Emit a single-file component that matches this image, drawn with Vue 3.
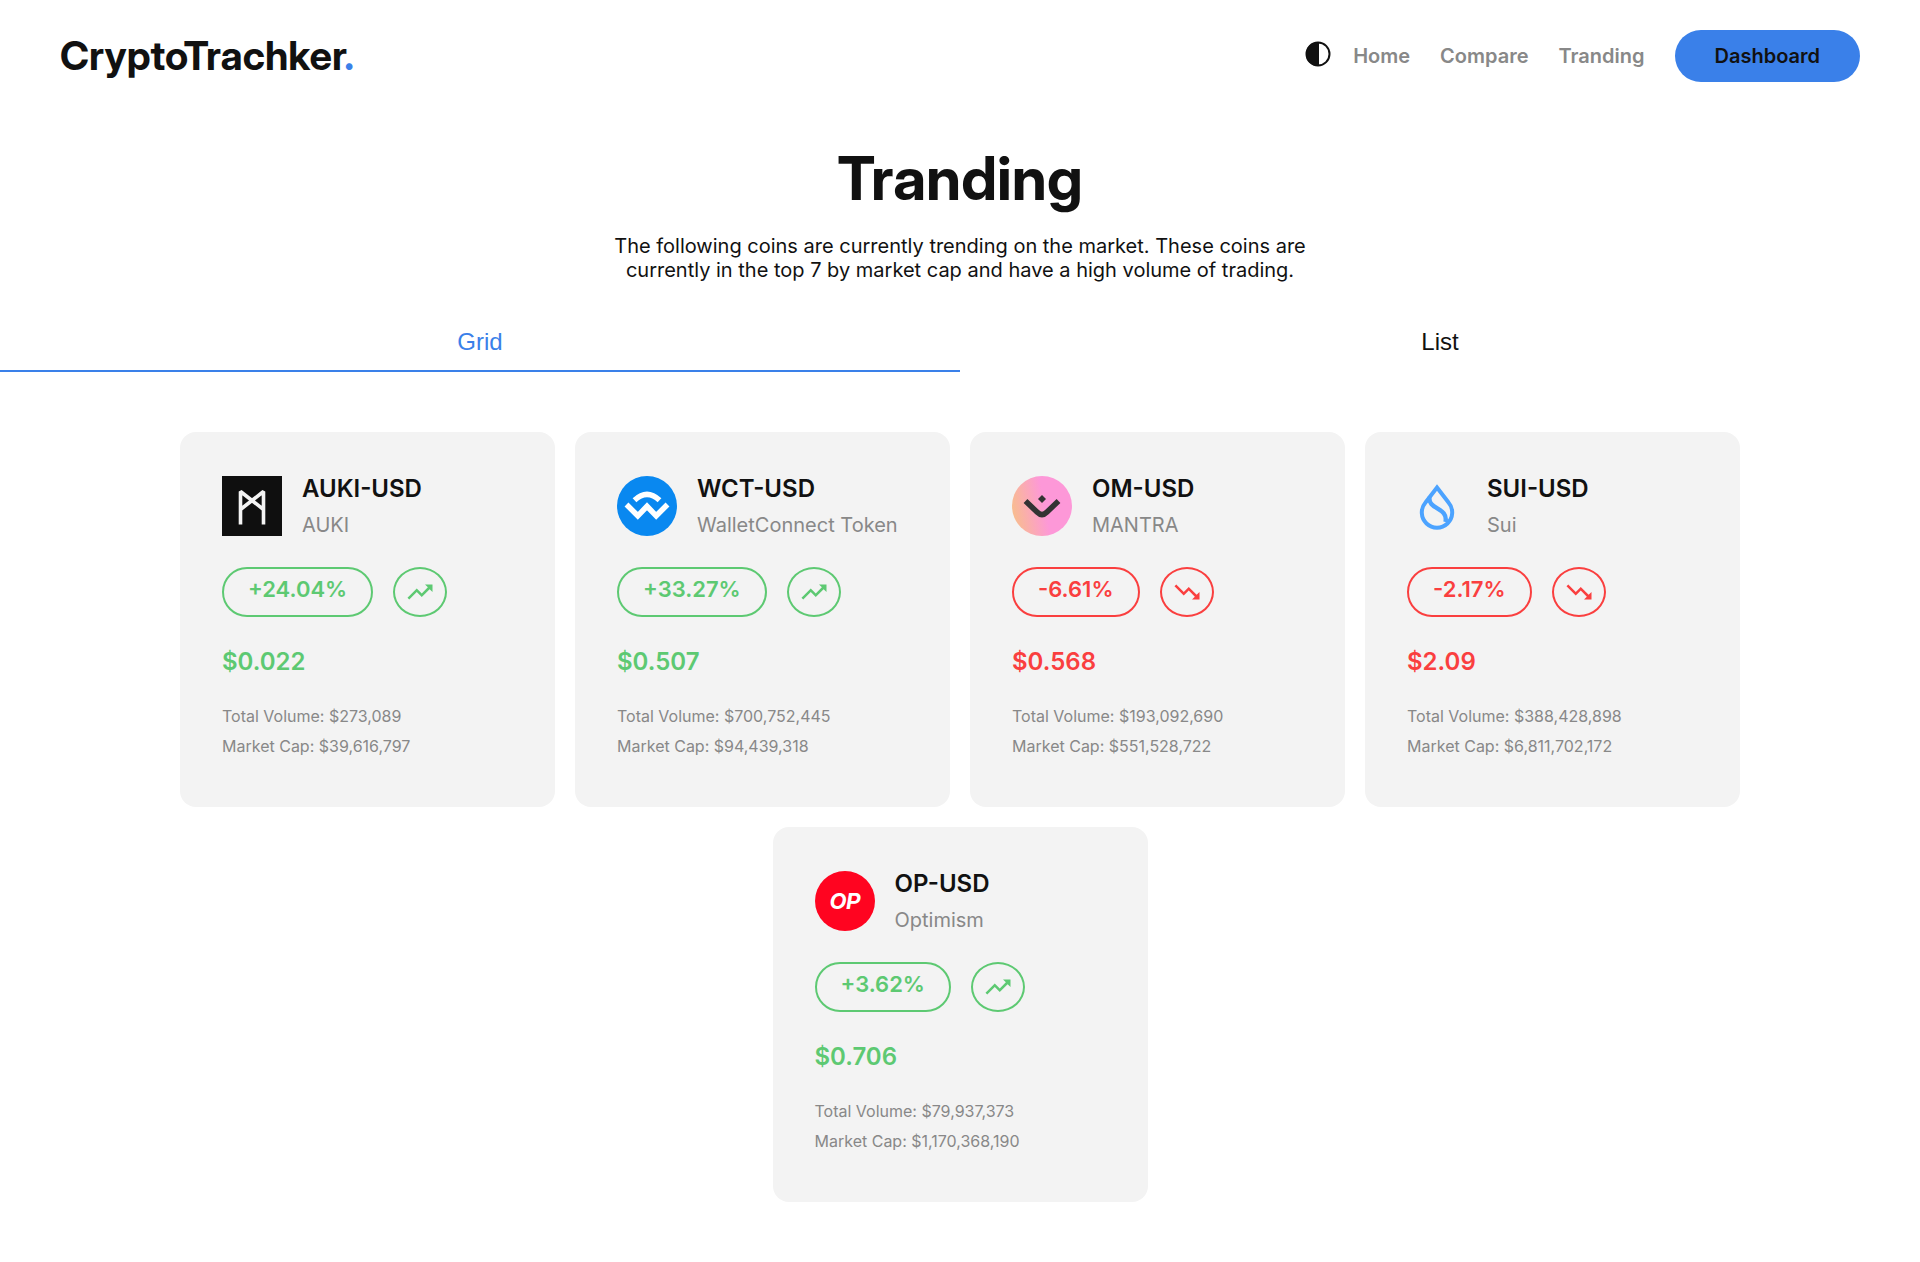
<script setup>
import { ref } from 'vue'

const view = ref('grid')

const coins = [
  { id: 'auki', symbol: 'AUKI-USD', name: 'AUKI', change: '+24.04%', price: '$0.022', volume: '$273,089', cap: '$39,616,797' },
  { id: 'wct', symbol: 'WCT-USD', name: 'WalletConnect Token', change: '+33.27%', price: '$0.507', volume: '$700,752,445', cap: '$94,439,318' },
  { id: 'om', symbol: 'OM-USD', name: 'MANTRA', change: '-6.61%', price: '$0.568', volume: '$193,092,690', cap: '$551,528,722' },
  { id: 'sui', symbol: 'SUI-USD', name: 'Sui', change: '-2.17%', price: '$2.09', volume: '$388,428,898', cap: '$6,811,702,172' },
  { id: 'op', symbol: 'OP-USD', name: 'Optimism', change: '+3.62%', price: '$0.706', volume: '$79,937,373', cap: '$1,170,368,190' },
]

const isDown = (coin) => coin.change.startsWith('-')
</script>

<template>
  <header class="navbar">
    <a class="logo" href="#">CryptoTrachker<span class="dot">.</span></a>
    <nav class="links">
      <button class="theme" type="button" aria-label="Toggle theme">
        <svg viewBox="0 0 26 26" width="26" height="26">
          <circle cx="13" cy="13" r="11.5" fill="none" stroke="#111" stroke-width="2" />
          <path d="M14 1v24h-1a12 12 0 0 1 0-24z" fill="#111" />
        </svg>
      </button>
      <a class="link" href="#">Home</a>
      <a class="link" href="#">Compare</a>
      <a class="link" href="#">Tranding</a>
      <button class="dashboard" type="button">Dashboard</button>
    </nav>
  </header>

  <main>
    <section class="intro">
      <h1>Tranding</h1>
      <p>The following coins are currently trending on the market. These coins are currently in the top 7 by market cap and have a high volume of trading.</p>
    </section>

    <div class="tabs" role="tablist">
      <button class="tab" :class="{ active: view === 'grid' }" type="button" role="tab" :aria-selected="view === 'grid'" @click="view = 'grid'">Grid</button>
      <button class="tab" :class="{ active: view === 'list' }" type="button" role="tab" :aria-selected="view === 'list'" @click="view = 'list'">List</button>
    </div>

    <div class="grid">
      <article v-for="coin in coins" :key="coin.id" class="card" :class="{ down: isDown(coin) }">
        <div class="head">
          <svg v-if="coin.id === 'auki'" class="coin-logo" viewBox="0 0 60 60" aria-hidden="true">
            <rect width="60" height="60" fill="#0f0f0f" />
            <path d="M18.5 48.5V15.5L41.5 33.5M41.5 48.5V15.5L18.5 33.5" fill="none" stroke="#f4f4f4" stroke-width="3.6" stroke-linejoin="bevel" />
          </svg>
          <svg v-else-if="coin.id === 'wct'" class="coin-logo" viewBox="0 0 60 60" aria-hidden="true">
            <circle cx="30" cy="30" r="30" fill="#0988f0" />
            <path d="M17.5 24.3Q30 12.5 42.5 24.3M9.5 28.5L20.8 39.8L30 30.3L39.2 39.8L50.5 28.5" fill="none" stroke="#fff" stroke-width="5.5" />
          </svg>
          <svg v-else-if="coin.id === 'om'" class="coin-logo" viewBox="0 0 60 60" aria-hidden="true">
            <defs>
              <linearGradient id="mantra" x1="0" y1="0.6" x2="1" y2="0.4">
                <stop offset="0" stop-color="#f8bd8e" />
                <stop offset="0.55" stop-color="#fd98d8" />
              </linearGradient>
            </defs>
            <circle cx="30" cy="30" r="30" fill="url(#mantra)" />
            <path d="M13.5 25L25 36Q30 41 35 36L46.5 25" fill="none" stroke="#333" stroke-width="5.5" />
            <path d="M30 19l4 4-4 4-4-4z" fill="#333" />
          </svg>
          <svg v-else-if="coin.id === 'sui'" class="coin-logo" viewBox="0 0 60 60" aria-hidden="true">
            <path d="M30 11.5L41.5 26.5A15.200 15.200 0 1 1 18.500 26.500Z" fill="none" stroke="#4ca3ff" stroke-width="4" />
            <path d="M22.5 21C20.5 34 41.5 31 38.5 46" fill="none" stroke="#4ca3ff" stroke-width="4.4" />
          </svg>
          <svg v-else class="coin-logo" viewBox="0 0 60 60" aria-hidden="true">
            <circle cx="30" cy="30" r="30" fill="#ff0420" />
            <text x="30" y="38" text-anchor="middle" class="op-mark">OP</text>
          </svg>
          <div class="names">
            <h2>{{ coin.symbol }}</h2>
            <p>{{ coin.name }}</p>
          </div>
        </div>

        <div class="change">
          <span class="pill">{{ coin.change }}</span>
          <span class="trend">
            <svg viewBox="0 0 24 24" width="30" height="30" aria-hidden="true">
              <path v-if="isDown(coin)" d="m16 18 2.29-2.29-4.88-4.88-4 4L2 7.41 3.41 6l6 6 4-4 6.3 6.29L22 12v6z" />
              <path v-else d="m16 6 2.29 2.29-4.88 4.88-4-4L2 16.59 3.41 18l6-6 4 4 6.3-6.29L22 12V6z" />
            </svg>
          </span>
        </div>

        <h3 class="price">{{ coin.price }}</h3>
        <div class="stats">
          <p>Total Volume: {{ coin.volume }}</p>
          <p>Market Cap: {{ coin.cap }}</p>
        </div>
      </article>
    </div>
  </main>
</template>

<style>
body {
  margin: 0;
  background: #fff;
  color: #111;
  font-family: Inter, "Liberation Sans", sans-serif;
}
</style>

<style scoped>
h1,
h2,
h3,
p {
  margin: 0;
}

button {
  padding: 0;
  border: 0;
  background: none;
  color: inherit;
  font: inherit;
  cursor: pointer;
}

a {
  text-decoration: none;
}

.navbar {
  display: flex;
  align-items: center;
  justify-content: space-between;
  padding: 30px 60px;
}

.logo {
  color: #111;
  font-family: "Inter Display", Inter, sans-serif;
  font-size: 40px;
  line-height: 52px;
  font-weight: 700;
}

.dot {
  color: #3a80e9;
}

.links {
  display: flex;
  align-items: center;
  gap: 30px;
  font-size: 20px;
  line-height: 24px;
  font-weight: 600;
}

.theme {
  display: flex;
  margin: 0 -8px 4px 0;
}

.link {
  color: #888;
}

.links .dashboard {
  padding: 14px 40px;
  border-radius: 30px;
  background: #3a80e9;
}

.intro {
  padding: 30px 20px 32px;
  text-align: center;
}

.intro h1 {
  font-family: "Inter Display", Inter, sans-serif;
  font-size: 60px;
  line-height: 72px;
  font-weight: 700;
}

.intro p {
  max-width: 700px;
  margin: 20px auto 0;
  font-size: 20px;
  line-height: 24px;
}

.tabs {
  display: flex;
}

.tabs .tab {
  flex: 1;
  height: 58px;
  border-bottom: 2px solid transparent;
  font-family: "Liberation Sans", Arial, sans-serif;
  font-size: 24px;
}

.tabs .active {
  border-color: #3a80e9;
  color: #3a80e9;
}

.grid {
  display: flex;
  flex-wrap: wrap;
  justify-content: center;
  gap: 20px;
  padding: 60px;
}

.card {
  --accent: #5dc972;
  box-sizing: border-box;
  width: 375px;
  padding: 43px 42px 46px;
  border-radius: 16px;
  background: #f3f3f3;
}

.down {
  --accent: #fa3f3f;
}

.head {
  display: flex;
  align-items: center;
  gap: 20px;
}

.coin-logo {
  width: 60px;
  height: 60px;
}

.op-mark {
  fill: #fff;
  font-family: "Inter Display", Inter, sans-serif;
  font-size: 22px;
  font-style: italic;
  font-weight: 700;
}

.names h2 {
  font-size: 24px;
  line-height: 28px;
  font-weight: 600;
}

.names p {
  margin-top: 10px;
  color: #888;
  font-size: 20px;
  line-height: 24px;
}

.change {
  display: flex;
  gap: 20px;
  margin-top: 30px;
}

.pill,
.trend {
  box-sizing: border-box;
  height: 50px;
  border: 2px solid var(--accent);
}

.pill {
  padding: 6px 24px;
  border-radius: 25px;
  color: var(--accent);
  font-size: 22px;
  line-height: 28px;
  font-weight: 600;
}

.trend {
  display: flex;
  align-items: center;
  justify-content: center;
  width: 54px;
  border-radius: 50%;
  fill: var(--accent);
}

.price {
  margin-top: 30px;
  color: var(--accent);
  font-size: 24px;
  line-height: 30px;
  font-weight: 600;
}

.stats {
  margin-top: 24px;
  color: #888;
  font-size: 16px;
  line-height: 30px;
}
</style>
